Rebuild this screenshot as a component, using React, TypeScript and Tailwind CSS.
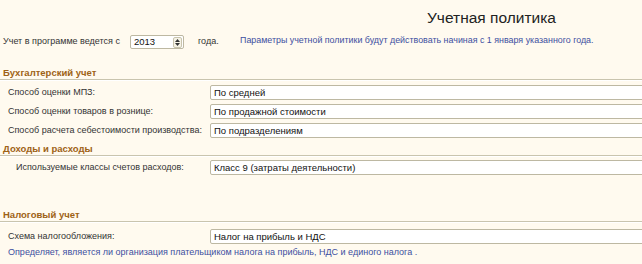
import React from 'react';

const font = { fontFamily: '"Liberation Sans", Arial, sans-serif' };

function Section({ title, className = '' }: { title: string; className?: string }) {
  return (
    <div className={`border-b border-[#c9c4ae] shadow-[0_1px_0_#ffffff] pl-[3px] h-[12px] leading-[10px] text-[9.5px] font-bold text-[#9e6216] ${className}`}>
      {title}
    </div>
  );
}

function Field({ label, value, indent = false, className = '' }: { label: string; value: string; indent?: boolean; className?: string }) {
  return (
    <div className={`flex items-center h-[15px] ${className}`}>
      <div className={`w-[210px] shrink-0 text-[9px] text-[#333] ${indent ? 'pl-[16px]' : 'pl-[8px]'}`}>{label}</div>
      <div className="w-[460px] shrink-0 h-[15px] bg-white border border-[#bdb8a2] rounded-[2px] pl-[3px] text-[9.5px] leading-[13px] text-[#111]">
        {value}
      </div>
    </div>
  );
}

export default function App() {
  return (
    <div style={font} className="w-[642px] h-[264px] overflow-hidden bg-[#fffaef] flex flex-col">
      <div className="pt-[9px] pl-[427px] h-[35px] text-[15.5px] leading-[18px] text-[#222]">Учетная политика</div>

      <div className="flex items-center h-[14px]">
        <div className="w-[130px] pl-[3px] text-[9px] text-[#333]">Учет в программе ведется с</div>
        <div className="w-[54px] h-[14px] bg-white border border-[#bdb8a2] rounded-[2px] flex items-center">
          <span className="flex-1 pl-[3px] text-[9.5px] leading-[12px] text-[#111]">2013</span>
          <div className="w-[9px] h-[11px] mr-[1px] border border-[#c9c4ae] rounded-[2px] bg-[#f6f3e6] flex flex-col items-center justify-center gap-[1px]">
            <svg width="5" height="3" viewBox="0 0 5 3"><path d="M0 3 L2.5 0 L5 3 Z" fill="#333" /></svg>
            <svg width="5" height="3" viewBox="0 0 5 3"><path d="M0 0 L2.5 3 L5 0 Z" fill="#333" /></svg>
          </div>
        </div>
        <div className="ml-[14px] w-[42px] text-[9px] text-[#333]">года.</div>
        <div className="text-[8.9px] text-[#3d4f9f] -mt-[2px]">Параметры учетной политики будут действовать начиная с 1 января указанного года.</div>
      </div>

      <Section title="Бухгалтерский учет" className="mt-[19px]" />
      <Field className="mt-[5px]" label="Способ оценки МПЗ:" value="По средней" />
      <Field className="mt-[4px]" label="Способ оценки товаров в рознице:" value="По продажной стоимости" />
      <Field className="mt-[4px]" label="Способ расчета себестоимости производства:" value="По подразделениям" />

      <Section title="Доходы и расходы" className="mt-[6px]" />
      <Field className="mt-[4px]" indent label="Используемые классы счетов расходов:" value="Класс 9 (затраты деятельности)" />

      <Section title="Налоговый учет" className="mt-[35px]" />
      <Field className="mt-[7px]" label="Схема налогообложения:" value="Налог на прибыль и НДС" />
      <div className="pl-[8px] mt-[2px] text-[9px] text-[#3d4f9f]">Определяет, является ли организация плательщиком налога на прибыль, НДС и единого налога .</div>
    </div>
  );
}
